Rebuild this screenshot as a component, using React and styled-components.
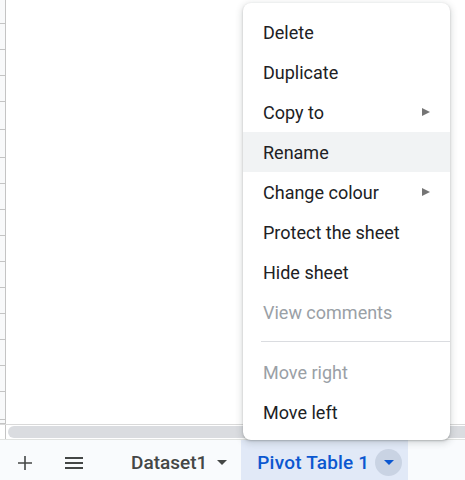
import styled, { createGlobalStyle } from "styled-components";

const GlobalStyle = createGlobalStyle`
  html, body {
    margin: 0;
    padding: 0;
    background: #ffffff;
  }
  body {
    font-family: Roboto, "Noto Sans", "Liberation Sans", sans-serif;
  }
`;

/* row heights of the visible grid part */
const rowHeights = [24, 26, 26, 26, 28, 28, 26, 26, 26, 26, 26, 26, 26, 26, 26, 28, 4];

const menuItems = [
  { label: "Delete" },
  { label: "Duplicate" },
  { label: "Copy to", sub: true },
  { label: "Rename", active: true },
  { label: "Change colour", sub: true },
  { label: "Protect the sheet" },
  { label: "Hide sheet" },
  { label: "View comments", disabled: true },
  { divider: true },
  { label: "Move right", disabled: true },
  { label: "Move left" },
];

const App = () => {
  return (
    <>
      <GlobalStyle />
      <Page>
        <Grid>
          <RowHeader>
            {rowHeights.map((h, i) => (
              <RowCell key={i} style={{ height: h }} />
            ))}
          </RowHeader>
          <Cells />
        </Grid>

        <ScrollRow>
          <ScrollCorner />
          <ScrollTrack>
            <Thumb />
          </ScrollTrack>
        </ScrollRow>

        <SheetBar>
          <IconButton>
            <svg width="14" height="14" viewBox="0 0 14 14">
              <path d="M7 0v14M0 7h14" stroke="#444746" strokeWidth="1.6" fill="none" />
            </svg>
          </IconButton>
          <IconButton>
            <svg width="18" height="12" viewBox="0 0 18 12">
              <path d="M0 1h18M0 6h18M0 11h18" stroke="#444746" strokeWidth="1.8" fill="none" />
            </svg>
          </IconButton>
          <Tab>
            <TabName>Dataset1</TabName>
            <Caret $color="#444746" />
          </Tab>
          <Tab $active>
            <TabName $active>Pivot Table 1</TabName>
            <CaretCircle>
              <Caret $color="#0b57d0" />
            </CaretCircle>
          </Tab>
        </SheetBar>

        <Menu>
          {menuItems.map((item, i) =>
            item.divider ? (
              <Divider key={i} />
            ) : (
              <MenuItem key={i} $active={item.active} $disabled={item.disabled}>
                <span>{item.label}</span>
                {item.sub && <SubArrow />}
              </MenuItem>
            )
          )}
        </Menu>
      </Page>
    </>
  );
};

export default App;

/* whole page */
const Page = styled.div`
  position: relative;
  width: 465px;
  height: 480px;
  display: flex;
  flex-direction: column;
  overflow: hidden;
  background: #ffffff;
`;

/* sheet grid */
const Grid = styled.div`
  display: flex;
  height: 424px;
  border-bottom: 1px solid #d9d9d9;
`;

const RowHeader = styled.div`
  width: 5px;
  border-right: 1px solid #c4c4c4;
  display: flex;
  flex-direction: column;
  background: #f8f9fa;
`;

const RowCell = styled.div`
  box-sizing: border-box;
  border-bottom: 1px solid #c4c4c4;
  flex-shrink: 0;
`;

const Cells = styled.div`
  flex: 1;
  background: #ffffff;
`;

/* horizontal scrollbar */
const ScrollRow = styled.div`
  display: flex;
  height: 14px;
  border-bottom: 1px solid #e1e3e1;
  background: #ffffff;
`;

const ScrollCorner = styled.div`
  width: 5px;
  border-right: 1px solid #c4c4c4;
`;

const ScrollTrack = styled.div`
  flex: 1;
  padding: 1px 0 1px 2px;
  display: flex;
`;

const Thumb = styled.div`
  flex: 1;
  background: #dadce0;
  border-radius: 6px 0 0 6px;
`;

/* bottom sheet tabs */
const SheetBar = styled.div`
  flex: 1;
  display: flex;
  align-items: stretch;
  background: #f9fbfd;
  padding-left: 8px;
`;

const IconButton = styled.div`
  width: 34px;
  margin-right: 15px;
  padding-top: 5px;
  display: flex;
  align-items: center;
  justify-content: center;
`;

const Tab = styled.div`
  display: flex;
  align-items: center;
  gap: ${(p) => (p.$active ? "6px" : "10px")};
  padding: ${(p) => (p.$active ? "5px 6px 0 16px" : "5px 14px 0 25px")};
  background: ${(p) => (p.$active ? "#e1e9f7" : "transparent")};
`;

const TabName = styled.span`
  font-size: 19px;
  font-weight: 500;
  letter-spacing: ${(p) => (p.$active ? "0.2px" : "0")};
  white-space: nowrap;
  color: ${(p) => (p.$active ? "#0b57d0" : "#444746")};
`;

const Caret = styled.span`
  width: 0;
  height: 0;
  border-left: 5px solid transparent;
  border-right: 5px solid transparent;
  border-top: 5px solid ${(p) => p.$color};
`;

const CaretCircle = styled.span`
  width: 27px;
  height: 27px;
  flex-shrink: 0;
  border-radius: 50%;
  background: #c9d3e3;
  display: flex;
  align-items: center;
  justify-content: center;
`;

/* context menu */
const Menu = styled.div`
  position: absolute;
  left: 243px;
  top: 3px;
  width: 207px;
  padding: 9px 0 8px;
  background: #ffffff;
  border-radius: 8px;
  box-shadow: 0 2px 6px 2px rgba(60, 64, 67, 0.15), 0 1px 2px rgba(60, 64, 67, 0.3);
`;

const MenuItem = styled.div`
  height: 40px;
  display: flex;
  align-items: center;
  justify-content: space-between;
  padding: 0 20px 0 20px;
  font-size: 18px;
  color: ${(p) => (p.$disabled ? "#9aa0a6" : "#202124")};
  background: ${(p) => (p.$active ? "#f1f3f4" : "transparent")};
`;

const SubArrow = styled.span`
  width: 0;
  height: 0;
  border-top: 4px solid transparent;
  border-bottom: 4px solid transparent;
  border-left: 8px solid #757575;
`;

const Divider = styled.div`
  height: 1px;
  margin: 9px 0 10px 18px;
  background: #dadce0;
`;
